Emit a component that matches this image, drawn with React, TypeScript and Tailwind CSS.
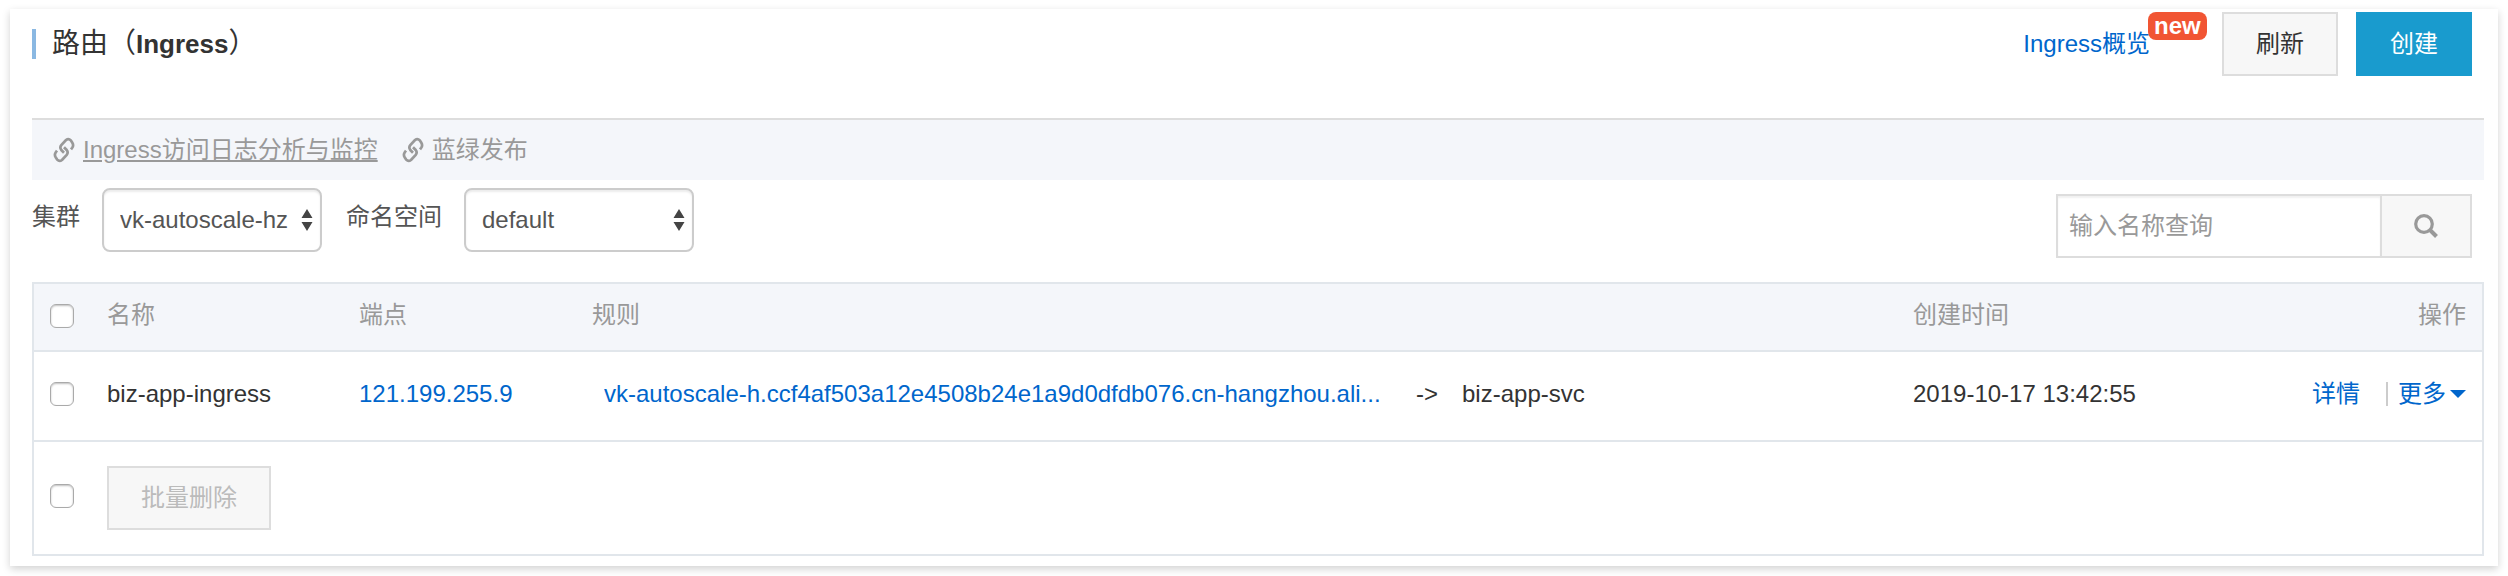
import React, { useState } from 'react';

const selectClass =
  'h-16 w-full appearance-none rounded-lg border-2 border-[#ccc] bg-white pl-4 pr-8 text-[#555] shadow-[inset_0_2px_2px_rgba(0,0,0,0.08)]';
const checkboxClass =
  'block h-6 w-6 appearance-none rounded-md border border-[#aaa] bg-white shadow-[inset_0_1px_2px_rgba(0,0,0,0.25)] checked:bg-[#06c]';

const LinkIcon = () => (
  <svg viewBox="0 0 22 26" className="h-[26px] w-[22px]" fill="none" stroke="currentColor" strokeWidth="2.7">
    <path d="M18 12.3 L19.2 10.8 Q21 8.2 19.2 5.4 L17.8 3.4 Q15.6 1 13 3 L8.3 8.2 Q6.4 10.6 8.3 13 L11 15.8" />
    <path d="M4 13.7 L2.8 15.2 Q1 17.8 2.8 20.6 L4.2 22.6 Q6.4 25 9 23 L13.7 17.8 Q15.6 15.4 13.7 13 L11 10.2" />
  </svg>
);

interface FilterProps {
  id: string;
  label: string;
  value: string;
  width: string;
}

const Filter: React.FC<FilterProps> = ({ id, label, value, width }) => (
  <div className="flex items-center">
    <label htmlFor={id} className="mr-[22px] pb-1.5 text-[#555]">
      {label}
    </label>
    <div className={`relative ${width}`}>
      <select id={id} className={selectClass}>
        <option>{value}</option>
      </select>
      <svg viewBox="0 0 12 22" className="pointer-events-none absolute right-[9px] top-[21px] h-[22px] w-3" fill="#444">
        <path d="M6 0 L11.5 9 H0.5 Z M6 22 L11.5 13 H0.5 Z" />
      </svg>
    </div>
  </div>
);

const App: React.FC = () => {
  const [query, setQuery] = useState('');

  return (
    <div className="bg-white px-[10px] pb-[10px] pt-[9px] font-['Liberation_Sans','Noto_Sans_CJK_SC',sans-serif] text-[24px] leading-9 text-[#333]">
      <main className="bg-white pb-[10px] pl-[22px] pr-[14px] shadow-[0_3px_8px_rgba(0,0,0,0.18)]">
        <header className="flex items-center justify-between border-b-2 border-[#ddd] pb-[42px] pr-3 pt-[3px]">
          <div className="flex items-center">
            <span className="h-[30px] w-1 bg-[#8ab8e2]" />
            <h1 className="ml-4 text-[28px]">
              路由（<span className="text-[26px] font-bold">Ingress</span>）
            </h1>
          </div>
          <div className="flex items-center">
            <a href="#overview" className="relative mr-[72px] text-[#06c]">
              Ingress概览
              <span className="absolute -top-3.5 left-full -ml-0.5 rounded-lg bg-[#f15533] px-[6px] font-bold leading-7 text-white">
                new
              </span>
            </a>
            <button className="h-16 w-[116px] border-2 border-[#ddd] bg-[#f7f7f7]">刷新</button>
            <button className="ml-[18px] h-16 w-[116px] bg-[#199bce] text-white">创建</button>
          </div>
        </header>

        <nav className="flex h-[60px] items-center gap-6 bg-[#f4f6fa] pl-[21px] text-[#999]">
          <a href="#logs" className="flex items-center gap-2">
            <LinkIcon />
            <span className="underline">Ingress访问日志分析与监控</span>
          </a>
          <a href="#blue-green" className="flex items-center gap-2">
            <LinkIcon />
            <span>蓝绿发布</span>
          </a>
        </nav>

        <div className="flex items-start justify-between pb-6 pr-3">
          <div className="flex gap-6 pt-2">
            <Filter id="cluster" label="集群" value="vk-autoscale-hz" width="w-[220px]" />
            <Filter id="namespace" label="命名空间" value="default" width="w-[230px]" />
          </div>
          <form className="flex pt-[14px]" onSubmit={(e) => e.preventDefault()}>
            <input
              type="text"
              aria-label="输入名称查询"
              placeholder="输入名称查询"
              value={query}
              onChange={(e) => setQuery(e.target.value)}
              className="h-16 w-[326px] border-2 border-[#ddd] px-[11px] shadow-[inset_0_2px_2px_rgba(0,0,0,0.06)] placeholder:text-[#999]"
            />
            <button
              aria-label="搜索"
              className="flex h-16 w-[90px] items-center justify-center border-2 border-l-0 border-[#ddd] bg-[#f7f7f7]"
            >
              <svg viewBox="0 0 24 24" className="h-6 w-6" fill="none" stroke="#999">
                <circle cx="10" cy="10" r="8.3" strokeWidth="3.2" />
                <path d="M15.5 15.5 L22.5 22.5" strokeWidth="4" />
              </svg>
            </button>
          </form>
        </div>

        <table className="w-full table-fixed border-collapse border-2 border-[#e1e6eb] text-left">
          <colgroup>
            <col className="w-[58px]" />
            <col className="w-[252px]" />
            <col className="w-[233px]" />
            <col />
            <col className="w-[320px]" />
            <col className="w-[266px]" />
          </colgroup>
          <thead className="bg-[#f4f6fa] text-[#999]">
            <tr className="h-[68px] border-b-2 border-[#e1e6eb]">
              <th className="pb-0.5 pl-4">
                <input type="checkbox" aria-label="全选" className={checkboxClass} />
              </th>
              <th className="px-4 pb-1 font-normal">名称</th>
              <th className="px-4 pb-1 font-normal">端点</th>
              <th className="px-4 pb-1 font-normal">规则</th>
              <th className="px-4 pb-1 font-normal">创建时间</th>
              <th className="px-4 pb-1 text-right font-normal">操作</th>
            </tr>
          </thead>
          <tbody>
            <tr className="h-[90px] border-b-2 border-[#e1e6eb]">
              <td className="pb-1 pl-4">
                <input type="checkbox" aria-label="biz-app-ingress" className={checkboxClass} />
              </td>
              <td className="px-4 pb-1">biz-app-ingress</td>
              <td className="px-4 pb-1">
                <a href="#endpoint" className="text-[#06c]">
                  121.199.255.9
                </a>
              </td>
              <td className="px-4 pb-1">
                <div className="flex gap-6 pl-3">
                  <a href="#rule" className="w-[788px] truncate text-[#06c]">
                    vk-autoscale-h.ccf4af503a12e4508b24e1a9d0dfdb076.cn-hangzhou.ali...
                  </a>
                  <span>-&gt;</span>
                  <span>biz-app-svc</span>
                </div>
              </td>
              <td className="px-4 pb-1">2019-10-17 13:42:55</td>
              <td className="px-4 pb-1">
                <div className="flex items-center justify-end text-[#06c]">
                  <a href="#detail">详情</a>
                  <span className="ml-[26px] mr-[10px] h-6 w-[2px] bg-[#ccc]" />
                  <button className="flex items-center gap-1">
                    更多
                    <svg viewBox="0 0 16 8" className="h-2 w-4" fill="currentColor">
                      <path d="M0 0 H16 L8 8 Z" />
                    </svg>
                  </button>
                </div>
              </td>
            </tr>
          </tbody>
          <tfoot>
            <tr className="h-[114px]">
              <td className="pb-1 pl-4">
                <input type="checkbox" aria-label="选择全部" className={checkboxClass} />
              </td>
              <td colSpan={5} className="px-4">
                <button disabled className="block h-16 w-[164px] border-2 border-[#ddd] bg-[#f7f7f7] text-[#bbb]">
                  批量删除
                </button>
              </td>
            </tr>
          </tfoot>
        </table>
      </main>
    </div>
  );
};

export default App;
